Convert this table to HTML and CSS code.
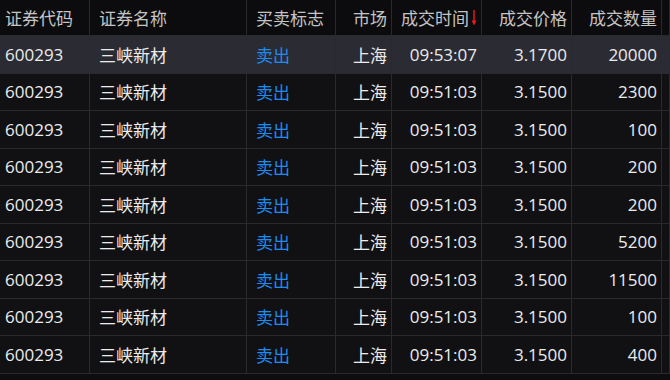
FILE: index.html
```html
<!DOCTYPE html>
<html lang="zh-CN">
<head>
<meta charset="utf-8">
<link rel="stylesheet" href="styles.css">
</head>
<body>
<div class="grid">
  <div class="c hd l1">证券代码</div>
  <div class="c hd l2">证券名称</div>
  <div class="c hd l2">买卖标志</div>
  <div class="c hd r">市场</div>
  <div class="c hd r">成交时间<svg class="arrow" width="6" height="16" viewBox="0 0 6 16"><path d="M3 0 V14.5" stroke="#f01c1c" stroke-width="1.4" fill="none"/><path d="M0.5 10.5 L3 15 L5.5 10.5 Z" fill="#f01c1c"/></svg></div>
  <div class="c hd r">成交价格</div>
  <div class="c hd r">成交数量</div>
  <div class="c hd"></div>

  <div class="row sel">
    <div class="c l1">600293</div><div class="c l2">三峡新材</div><div class="c l2 blue">卖出</div><div class="c r">上海</div><div class="c r">09:53:07</div><div class="c r">3.1700</div><div class="c r">20000</div><div class="c"></div>
  </div>
  <div class="row">
    <div class="c l1">600293</div><div class="c l2">三峡新材</div><div class="c l2 blue">卖出</div><div class="c r">上海</div><div class="c r">09:51:03</div><div class="c r">3.1500</div><div class="c r">2300</div><div class="c"></div>
  </div>
  <div class="row">
    <div class="c l1">600293</div><div class="c l2">三峡新材</div><div class="c l2 blue">卖出</div><div class="c r">上海</div><div class="c r">09:51:03</div><div class="c r">3.1500</div><div class="c r">100</div><div class="c"></div>
  </div>
  <div class="row">
    <div class="c l1">600293</div><div class="c l2">三峡新材</div><div class="c l2 blue">卖出</div><div class="c r">上海</div><div class="c r">09:51:03</div><div class="c r">3.1500</div><div class="c r">200</div><div class="c"></div>
  </div>
  <div class="row">
    <div class="c l1">600293</div><div class="c l2">三峡新材</div><div class="c l2 blue">卖出</div><div class="c r">上海</div><div class="c r">09:51:03</div><div class="c r">3.1500</div><div class="c r">200</div><div class="c"></div>
  </div>
  <div class="row">
    <div class="c l1">600293</div><div class="c l2">三峡新材</div><div class="c l2 blue">卖出</div><div class="c r">上海</div><div class="c r">09:51:03</div><div class="c r">3.1500</div><div class="c r">5200</div><div class="c"></div>
  </div>
  <div class="row">
    <div class="c l1">600293</div><div class="c l2">三峡新材</div><div class="c l2 blue">卖出</div><div class="c r">上海</div><div class="c r">09:51:03</div><div class="c r">3.1500</div><div class="c r">11500</div><div class="c"></div>
  </div>
  <div class="row">
    <div class="c l1">600293</div><div class="c l2">三峡新材</div><div class="c l2 blue">卖出</div><div class="c r">上海</div><div class="c r">09:51:03</div><div class="c r">3.1500</div><div class="c r">100</div><div class="c"></div>
  </div>
  <div class="row">
    <div class="c l1">600293</div><div class="c l2">三峡新材</div><div class="c l2 blue">卖出</div><div class="c r">上海</div><div class="c r">09:51:03</div><div class="c r">3.1500</div><div class="c r">400</div><div class="c"></div>
  </div>
</div>
</body>
</html>
```
FILE: styles.css
```css
html, body {
  margin: 0;
  padding: 0;
  background: #0d0d10;
  width: 670px;
  height: 380px;
  overflow: hidden;
}
.grid {
  display: grid;
  grid-template-columns: 90px 157px 89px 56px 90px 90px 90px 1fr;
  grid-template-rows: 36px;
  grid-auto-rows: 37.5px;
  font-family: "Open Sans", "Noto Sans CJK SC", sans-serif;
  font-size: 17px;
  color: #ececec;
}
.row {
  display: contents;
}
.c {
  box-sizing: border-box;
  border-right: 1px solid #2a2a2e;
  border-bottom: 1px solid #2a2a2e;
  display: flex;
  align-items: center;
  white-space: nowrap;
  background: #111114;
}
.hd {
  color: #c4c4c4;
  background: #0c0c0e;
}
.sel .c {
  background: #2b2b33;
}
.l1 { padding-left: 5px; }
.l2 { padding-left: 9px; }
.r { justify-content: flex-end; padding-right: 4px; }
.blue { color: #1d8cf0; }
.arrow {
  margin-left: 2px;
  margin-top: 0px;
}
```
